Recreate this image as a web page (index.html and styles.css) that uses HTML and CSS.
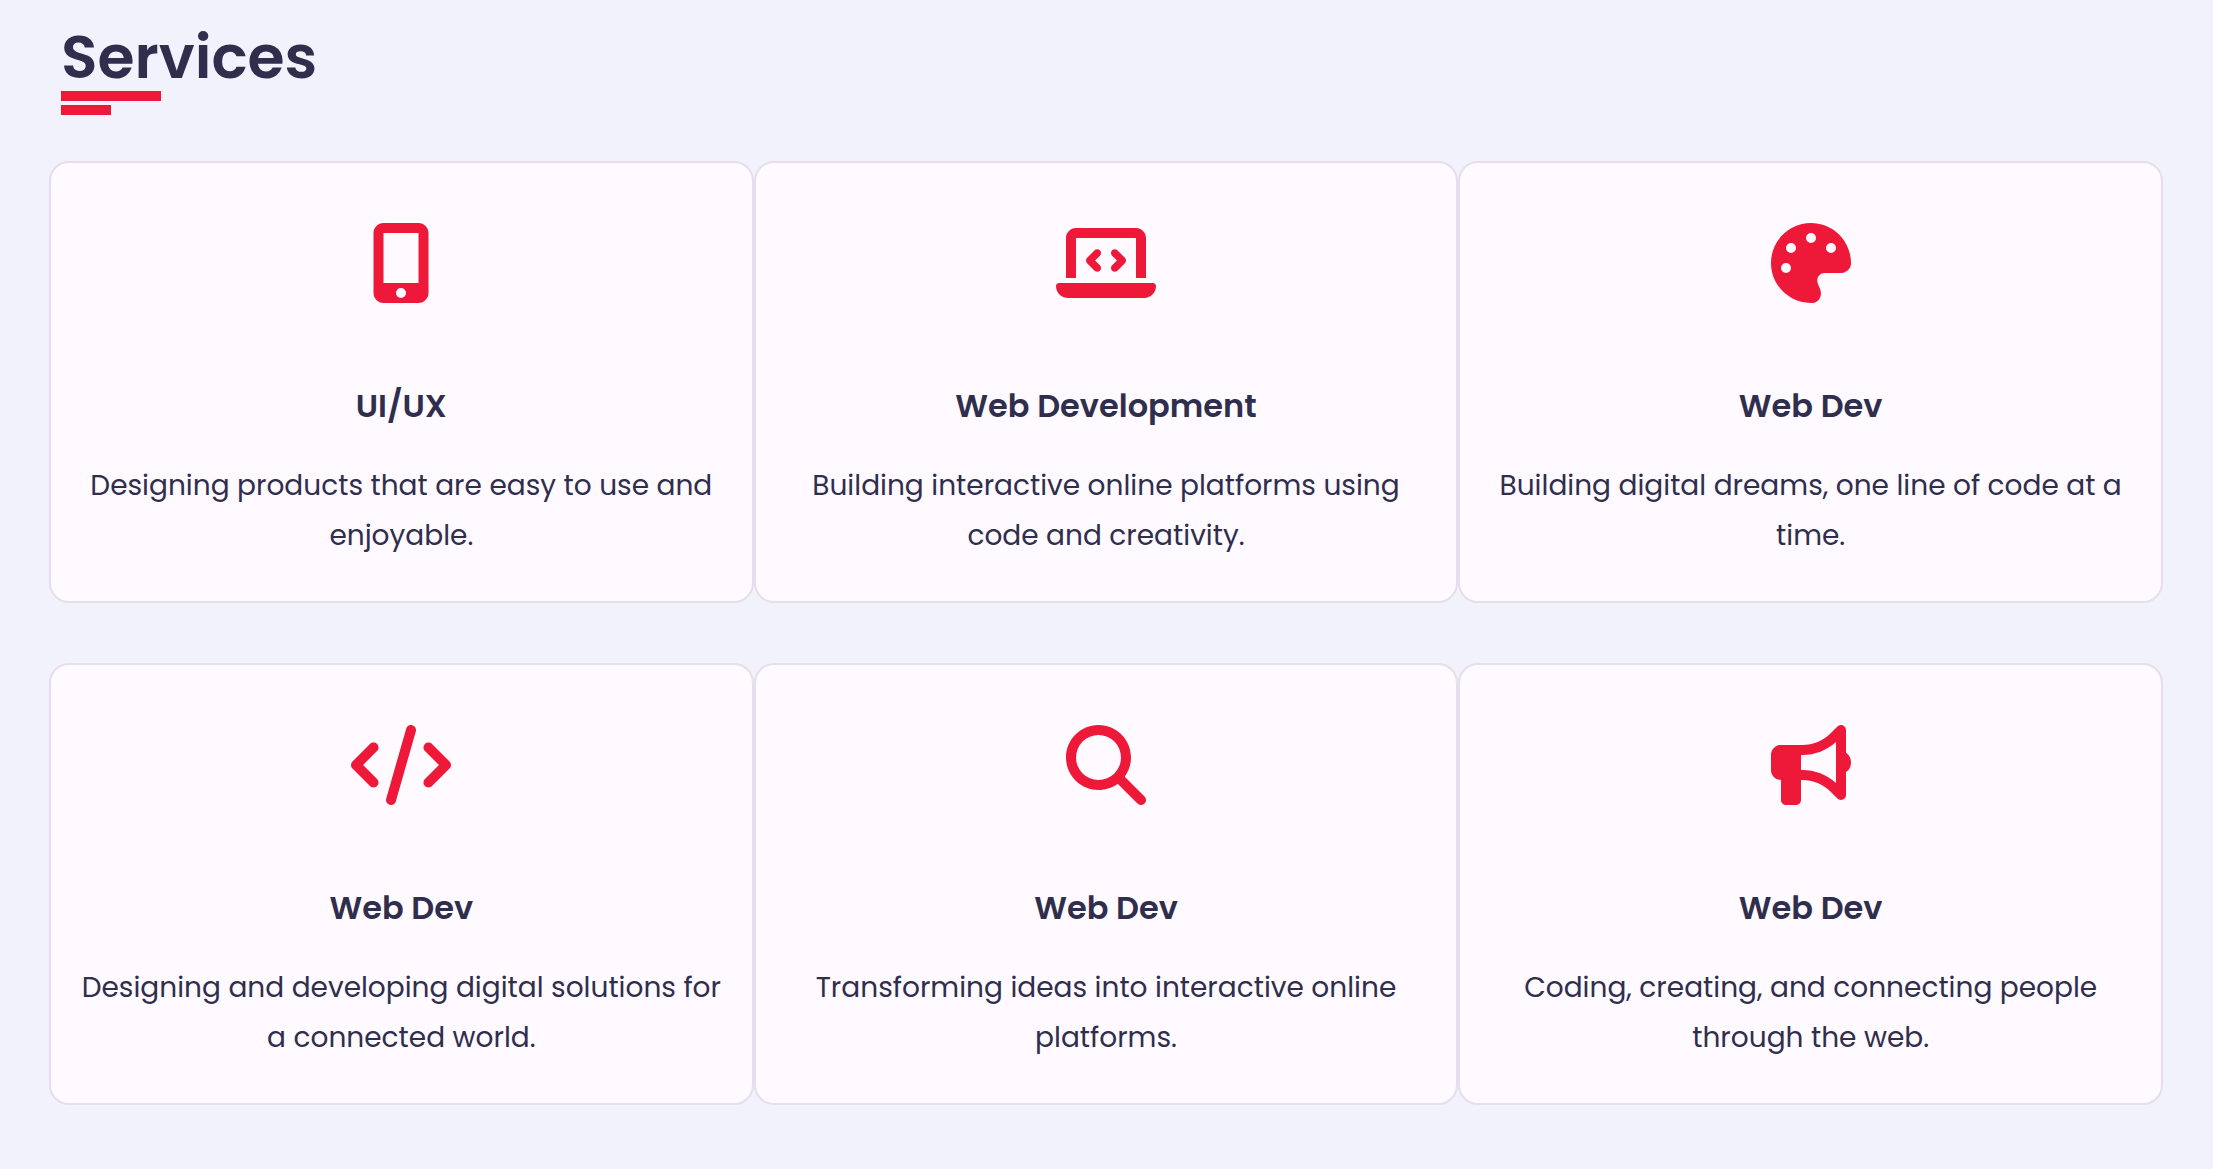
FILE: index.html
```html
<!DOCTYPE html>
<html lang="en">
<head>
<meta charset="utf-8">
<meta name="viewport" content="width=device-width, initial-scale=1">
<title>Services</title>
<link rel="stylesheet" href="styles.css">
</head>
<body>
<main class="services">
  <h1 class="section-title">Services</h1>
  <div class="service-grid">
    <article class="card">
      <svg class="icon" viewBox="0 0 384 512" aria-hidden="true"><path d="M16 64C16 28.700 44.700 0 80 0H304c35.300 0 64 28.700 64 64V448c0 35.300-28.700 64-64 64H80c-35.300 0-64-28.700-64-64V64zM224 448a32 32 0 1 0 -64 0 32 32 0 1 0 64 0zM304 64H80V384H304V64z"/></svg>
      <h2 class="card-title">UI/UX</h2>
      <p class="card-text">Designing products that are easy to use and enjoyable.</p>
    </article>
    <article class="card">
      <svg class="icon" viewBox="0 0 640 512" aria-hidden="true"><path d="M64 96c0-35.300 28.700-64 64-64H512c35.300 0 64 28.700 64 64V352H512V96H128V352H64V96zM0 403.200C0 392.600 8.600 384 19.200 384H620.800c10.600 0 19.200 8.600 19.200 19.200c0 42.400-34.400 76.800-76.800 76.800H76.800C34.400 480 0 445.600 0 403.200zM281 209l-31 31 31 31c9.400 9.400 9.400 24.600 0 33.900s-24.600 9.400-33.900 0l-48-48c-9.400-9.400-9.400-24.600 0-33.900l48-48c9.400-9.400 24.600-9.400 33.900 0s9.400 24.600 0 33.900zM393 175l48 48c9.400 9.400 9.400 24.600 0 33.900l-48 48c-9.400 9.400-24.600 9.400-33.900 0s-9.400-24.600 0-33.900l31-31-31-31c-9.400-9.400-9.400-24.600 0-33.900s24.600-9.400 33.900 0z"/></svg>
      <h2 class="card-title">Web Development</h2>
      <p class="card-text">Building interactive online platforms using code and creativity.</p>
    </article>
    <article class="card">
      <svg class="icon" viewBox="0 0 512 512" aria-hidden="true"><path d="M512 256c0 .9 0 1.800 0 2.700c-.4 36.500-33.600 61.300-70.100 61.300H344c-26.500 0-48 21.500-48 48c0 3.400 .4 6.700 1 9.900c2.100 10.200 6.500 20 10.800 29.900c6.100 13.800 12.100 27.500 12.100 42c0 31.800-21.600 60.700-53.400 62c-3.500 .1-7 .2-10.600 .2C114.600 512 0 397.400 0 256S114.600 0 256 0S512 114.600 512 256zM128 288a32 32 0 1 0 -64 0 32 32 0 1 0 64 0zm0-96a32 32 0 1 0 0-64 32 32 0 1 0 0 64zM288 96a32 32 0 1 0 -64 0 32 32 0 1 0 64 0zm96 96a32 32 0 1 0 0-64 32 32 0 1 0 0 64z"/></svg>
      <h2 class="card-title">Web Dev</h2>
      <p class="card-text">Building digital dreams, one line of code at a time.</p>
    </article>
    <article class="card">
      <svg class="icon" viewBox="0 0 640 512" aria-hidden="true"><path d="M392.800 1.200c-17-4.900-34.700 5-39.600 22l-128 448c-4.900 17 5 34.700 22 39.600s34.700-5 39.600-22l128-448c4.900-17-5-34.700-22-39.600zm80.600 120.100c-12.500 12.500-12.500 32.800 0 45.300L562.700 256l-89.400 89.400c-12.500 12.500-12.500 32.800 0 45.300s32.800 12.500 45.300 0l112-112c12.500-12.500 12.500-32.800 0-45.300l-112-112c-12.500-12.500-32.800-12.500-45.300 0zm-306.700 0c-12.500-12.500-32.800-12.500-45.300 0l-112 112c-12.500 12.500-12.500 32.800 0 45.300l112 112c12.500 12.500 32.800 12.500 45.300 0s12.500-32.800 0-45.300L77.300 256l89.400-89.400c12.500-12.500 12.500-32.800 0-45.300z"/></svg>
      <h2 class="card-title">Web Dev</h2>
      <p class="card-text">Designing and developing digital solutions for a connected world.</p>
    </article>
    <article class="card">
      <svg class="icon" viewBox="0 0 512 512" aria-hidden="true"><path d="M416 208c0 45.900-14.900 88.300-40 122.700L502.600 457.400c12.500 12.500 12.500 32.800 0 45.300s-32.800 12.500-45.300 0L330.700 376c-34.400 25.200-76.800 40-122.700 40C93.100 416 0 322.900 0 208S93.100 0 208 0S416 93.100 416 208zM208 352a144 144 0 1 0 0-288 144 144 0 1 0 0 288z"/></svg>
      <h2 class="card-title">Web Dev</h2>
      <p class="card-text">Transforming ideas into interactive online platforms.</p>
    </article>
    <article class="card">
      <svg class="icon" viewBox="0 0 512 512" aria-hidden="true"><path d="M480 32c0-12.900-7.800-24.600-19.800-29.600s-25.700-2.200-34.900 6.900L381.700 53c-48 48-113.100 75-181 75H192 160 64c-35.300 0-64 28.700-64 64v96c0 35.300 28.700 64 64 64l0 128c0 17.700 14.300 32 32 32h64c17.700 0 32-14.300 32-32V352l8.700 0c67.900 0 133 27 181 75l43.600 43.600c9.200 9.200 22.900 11.900 34.900 6.900s19.800-16.600 19.800-29.600V300.400c18.600-8.800 32-32.500 32-60.400s-13.400-51.600-32-60.400V32zm-64 76.700V240 371.300C357.200 317.800 280.500 288 200.700 288H192V192h8.700c79.800 0 156.500-29.800 215.300-83.300z"/></svg>
      <h2 class="card-title">Web Dev</h2>
      <p class="card-text">Coding, creating, and connecting people through the web.</p>
    </article>
  </div>
</main>
</body>
</html>
```
FILE: styles.css
```css
* {
  box-sizing: border-box;
}

body {
  margin: 0;
  background: #f2f2fc;
  color: #302e4d;
  font-family: Poppins, Inter, sans-serif;
}

.services {
  padding: 23px 50px 64px 49px;
}

.section-title {
  display: flex;
  flex-direction: column;
  margin: 0 12px 46px;
  font-size: 60px;
  font-weight: 600;
  line-height: 68px;
}

/* Two stacked accent bars under the heading */
.section-title::before,
.section-title::after {
  content: "";
  order: 1;
  width: 100px;
  height: 10px;
  background: #ee1839;
}

.section-title::after {
  width: 50px;
  margin-top: 4px;
}

.service-grid {
  display: grid;
  grid-template-columns: repeat(3, 1fr);
  row-gap: 60px;
}

.card {
  display: flex;
  flex-direction: column;
  align-items: center;
  padding: 60px 28px 40px;
  border: 2px solid #e6deeb;
  border-radius: 20px;
  background: #fefaff;
  text-align: center;
}

.icon {
  height: 80px;
  fill: #ee1839;
}

.card-title {
  margin: 78px 0 30px;
  font-size: 32px;
  font-weight: 600;
  line-height: 50px;
}

.card-text {
  margin: 0;
  font-size: 28px;
  line-height: 50px;
}
```
